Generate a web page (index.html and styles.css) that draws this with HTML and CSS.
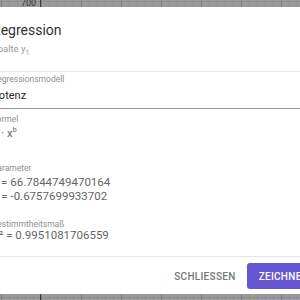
FILE: index.html
```html
<!DOCTYPE html>
<html lang="de">
<head>
    <meta charset="UTF-8">
    <meta name="viewport" content="width=device-width, initial-scale=1.0">
    <title>Regression</title>
    <link rel="stylesheet" href="styles.css">
</head>
<body>
    <!-- Diagramm im Hintergrund -->
    <div class="canvas-top">
        <span class="axis-label">700</span>
    </div>

    <!-- Dialog Regression -->
    <div class="dialog">
        <div class="dialog-header">
            <div class="dialog-title">Regression</div>
            <div class="dialog-subtitle">Spalte y<sub>1</sub></div>
        </div>

        <div class="dialog-body">
            <div class="field">
                <div class="field-label">Regressionsmodell</div>
                <div class="field-value">Potenz</div>
            </div>

            <div class="block">
                <div class="block-label">Formel</div>
                <div class="block-value">a · x<sup>b</sup></div>
            </div>

            <div class="block block-params">
                <div class="block-label">Parameter</div>
                <div class="block-value">a = 66.7844749470164</div>
                <div class="block-value">b = -0.6757699933702</div>
            </div>

            <div class="block block-r2">
                <div class="block-label">Bestimmtheitsmaß</div>
                <div class="block-value">R² = 0.9951081706559</div>
            </div>
        </div>

        <div class="dialog-actions">
            <button class="btn-text">Schliessen</button>
            <button class="btn-primary">Zeichnen</button>
        </div>
    </div>
</body>
</html>
```

FILE: styles.css
```css
body {
    margin: 0;
    height: 300px;
    overflow: hidden;
    font-family: Roboto, "Liberation Sans", sans-serif;
    background-color: #9a9a9a;
    background-image:
        linear-gradient(90deg, transparent 40px, #3a3a3a 40px, #3a3a3a 41px, transparent 41px),
        linear-gradient(90deg, #808080 1px, transparent 1px),
        linear-gradient(90deg, #8f8f8f 1px, transparent 1px),
        linear-gradient(0deg, #8f8f8f 1px, transparent 1px);
    background-size: 300px 300px, 40px 40px, 8px 8px, 8px 8px;
    background-position: 0 0, 1px 0, 1px 0, 0 2px;
    background-repeat: no-repeat, repeat, repeat, repeat;
}

.canvas-top {
    height: 7px;
    padding-left: 21px;
    overflow: hidden;
}
.axis-label {
    display: block;
    font-size: 9px;
    line-height: 7px;
    color: #333;
}

.dialog {
    width: 352px;
    height: 287px;
    margin-left: -25px;
    background: #fff;
    border-radius: 3px;
    display: flex;
    flex-direction: column;
    box-sizing: border-box;
}

.dialog-header {
    padding: 13px 17px 15px;
    border-bottom: 1px solid #e6e6e6;
}
.dialog-title {
    font-size: 14px;
    line-height: 20px;
    color: #333;
}
.dialog-subtitle {
    margin-top: 2px;
    font-size: 9.5px;
    line-height: 14px;
    color: #9a9a9a;
}
.dialog-subtitle sub {
    font-size: 7px;
    line-height: 0;
}

.dialog-body {
    flex: 1;
    padding: 1px 17px 0;
    border-bottom: 1px solid #e6e6e6;
}

.field {
    border-bottom: 1px solid #9a9a9a;
    padding-bottom: 4px;
}
.field-label, .block-label {
    font-size: 8.5px;
    line-height: 12px;
    color: #8f8f8f;
}
.field-value {
    margin-top: 3px;
    font-size: 11px;
    line-height: 16px;
    color: #2a2a2a;
}

.block {
    margin-top: 4px;
}
.block-params {
    margin-top: 22px;
}
.block-r2 {
    margin-top: 15px;
}
.block-value {
    margin-top: 1px;
    font-size: 11.5px;
    line-height: 14px;
    color: #666;
}
.block-r2 .block-value {
    margin-top: -2px;
}
.block-value + .block-value {
    margin-top: 0;
}
.block-value sup {
    font-size: 7px;
    line-height: 0;
}

.dialog-actions {
    display: flex;
    justify-content: flex-end;
    align-items: center;
    gap: 4px;
    padding: 6px 6px 5px;
}
button {
    font-family: Roboto, "Liberation Sans", sans-serif;
    font-size: 10px;
    font-weight: 500;
    letter-spacing: 0.3px;
    text-transform: uppercase;
    height: 26px;
    border: none;
    border-radius: 3px;
    cursor: pointer;
}
.btn-text {
    background: none;
    color: #777;
    padding: 0 7px;
}
.btn-primary {
    background-color: #6656d4;
    color: #fff;
    padding: 0 12px;
}
```
